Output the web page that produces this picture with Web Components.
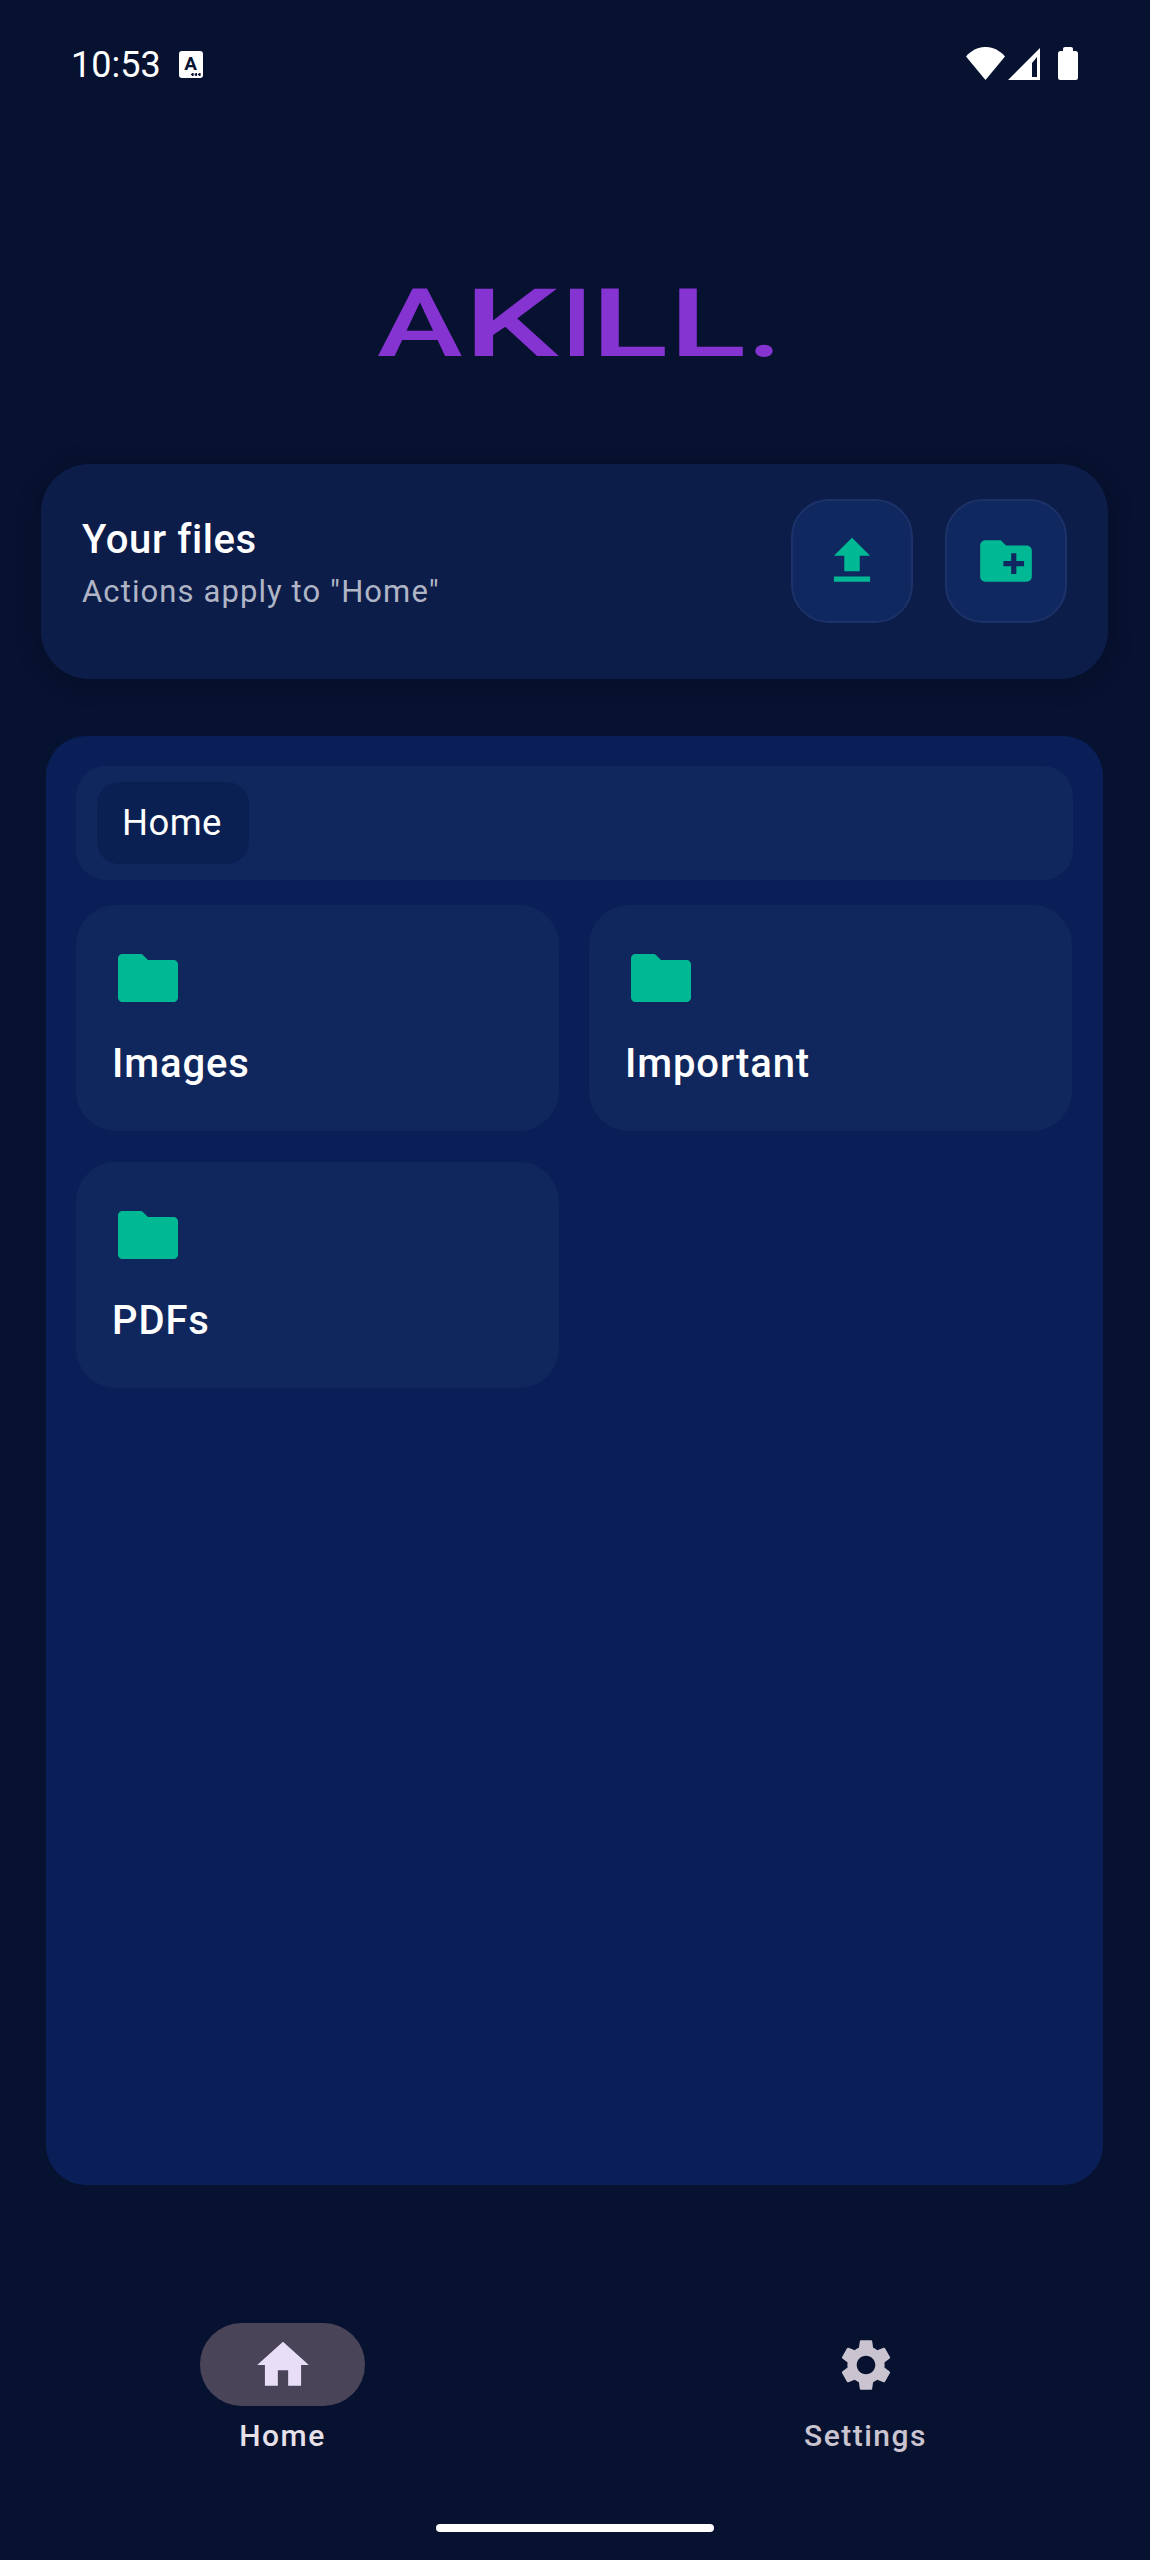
<!DOCTYPE html>
<html>
<head>
<meta charset="utf-8">
<style>
    html, body { margin: 0; background: #071231; }
    body { width: 1150px; height: 2560px; overflow: hidden; font-family: Roboto, sans-serif; color: #fff; }
</style>
</head>
<body>
<app-status-bar></app-status-bar>
<app-logo></app-logo>
<files-header></files-header>
<folder-panel>
    <folder-tile name="Images"></folder-tile>
    <folder-tile name="Important"></folder-tile>
    <folder-tile name="PDFs"></folder-tile>
</folder-panel>
<bottom-nav>
    <nav-item label="Home" icon="home" active></nav-item>
    <nav-item label="Settings" icon="settings"></nav-item>
</bottom-nav>
<gesture-handle></gesture-handle>

<script>
const ICONS = {
    upload: 'M9 16h6v-6h4l-7-7-7 7h4zm-4 2h14v2H5z',
    newFolder: 'M20 6h-8l-2-2H4c-1.11 0-1.99.89-1.99 2L2 18c0 1.11.89 2 2 2h16c1.11 0 2-.89 2-2V8c0-1.11-.89-2-2-2zm-1 8h-3v3h-2v-3h-3v-2h3V9h2v3h3v2z',
    folder: 'M10.3 4.3C10.1 4.1 9.9 4 9.6 4H3.5C2.7 4 2 4.7 2 5.5v13C2 19.3 2.700 20 3.500 20h17c.8 0 1.500-.7 1.500-1.500v-11C22 6.700 21.300 6 20.500 6H12z',
    home: 'M10 20v-6h4v6h5v-8h3L12 3 2 12h3v8z',
    settings: 'M19.14 12.94c.04-.3.06-.61.06-.94 0-.32-.02-.64-.07-.94l2.03-1.58c.18-.14.23-.41.12-.61l-1.92-3.32c-.12-.22-.37-.29-.59-.22l-2.39.96c-.5-.38-1.03-.7-1.62-.94l-.36-2.54c-.04-.24-.24-.41-.48-.41h-3.84c-.24 0-.43.17-.47.41l-.36 2.54c-.59.24-1.13.57-1.62.94l-2.39-.96c-.22-.08-.47 0-.59.22L2.74 8.87c-.12.21-.08.47.12.61l2.03 1.58c-.05.3-.09.63-.09.94s.02.64.07.94l-2.03 1.58c-.18.14-.23.41-.12.61l1.92 3.32c.12.22.37.29.59.22l2.39-.96c.5.38 1.03.7 1.62.94l.36 2.54c.05.24.24.41.48.41h3.84c.24 0 .44-.17.47-.41l.36-2.54c.59-.24 1.13-.56 1.62-.94l2.39.96c.22.08.47 0 .59-.22l1.92-3.32c.12-.22.07-.47-.12-.61l-2.01-1.58zM12 15.6c-1.98 0-3.6-1.62-3.6-3.6s1.62-3.6 3.6-3.6 3.6 1.62 3.6 3.6-1.62 3.6-3.6 3.6z'
};

function icon(name, size) {
    return `<svg xmlns="http://www.w3.org/2000/svg" width="${size}" height="${size}" viewBox="0 0 24 24" fill="currentColor"><path d="${ICONS[name]}"/></svg>`;
}

class AppStatusBar extends HTMLElement {
    constructor() {
        super();
        this.attachShadow({mode: 'open'});
        this.shadowRoot.innerHTML = `
            <style>
                :host { display: flex; align-items: flex-start; height: 80px; box-sizing: border-box; padding: 44px 72px 0 71px; color: #fff; }
                .time { font: 400 36px/42px Roboto, sans-serif; }
                .badge { position: relative; width: 24px; height: 27px; margin: 7px 0 0 18px; background: #fff; border-radius: 3px; color: #071231; font: 700 19px/25px Roboto, sans-serif; text-align: center; }
                .dots { position: absolute; right: 2px; bottom: 2px; width: 10px; height: 3px; background: radial-gradient(circle at 1.500px 1.500px, #071231 1.200px, transparent 1.500px) 0 0 / 3.500px 3px; }
                .right { margin-left: auto; display: flex; align-items: flex-start; padding-top: 3px; }
                svg { display: block; }
            </style>
            <span class="time">10:53</span>
            <div class="badge">A<span class="dots"></span></div>
            <div class="right">
                <svg width="39" height="33" viewBox="0 0 39 33" fill="#fff"><path d="M0 9.500C11-3.200 28-3.200 39 9.500L19.500 33z"/></svg>
                <svg style="margin:1px 0 0 3px" width="32" height="32" viewBox="0 0 32 32" fill="#fff" fill-rule="evenodd"><path d="M32 0V32H0zM24 15L29 9V29H24z"/></svg>
                <svg style="margin-left:18px" width="20" height="33" viewBox="0 0 20 33" fill="#fff"><path d="M5 4V2a2 2 0 0 1 2-2h6a2 2 0 0 1 2 2v2h2.500A2.500 2.500 0 0 1 20 6.500v24a2.500 2.500 0 0 1-2.500 2.500h-15A2.500 2.500 0 0 1 0 30.500v-24A2.500 2.500 0 0 1 2.500 4z"/></svg>
            </div>
        `;
    }
}

class AppLogo extends HTMLElement {
    constructor() {
        super();
        this.attachShadow({mode: 'open'});
        // real text, each letter stretched to the wide shape of the wordmark
        const letters = [['A', 87, 1.36, 500], ['K', 99, 1.57, 500], ['I', 28, 1, 700], ['L', 78, 1.5, 500], ['L', 78, 1.5, 500], ['.', 34, 1.33, 500]];
        this.shadowRoot.innerHTML = `
            <style>
                :host { display: flex; padding: 210px 0 0 377px; }
                .mark { display: flex; height: 68px; font: 500 95px/68px Roboto, sans-serif; color: #8533d1; white-space: nowrap; }
                span { display: block; flex: none; transform-origin: 0 50%; }
            </style>
            <div class="mark">${letters.map(([c, w, s, fw]) => `<span style="width:${w}px;font-weight:${fw};transform:scaleX(${s})">${c}</span>`).join('')}</div>
        `;
    }
}

class FilesHeader extends HTMLElement {
    constructor() {
        super();
        this.attachShadow({mode: 'open'});
        this.shadowRoot.innerHTML = `
            <style>
                :host { display: flex; align-items: flex-start; box-sizing: border-box; height: 215px; margin: 106px 42px 0 41px; padding: 0 41px; background: #0d1d4a; border-radius: 48px; box-shadow: 0 4px 26px rgba(0, 0, 0, .22); }
                .text { flex: 1; padding-top: 52px; }
                .title { font: 500 40px/47px Roboto, sans-serif; letter-spacing: .6px; color: #fff; }
                .sub { font: 400 31px/36px Roboto, sans-serif; letter-spacing: 1.100px; color: #b0b5c6; margin-top: 11px; }
                .actions { display: flex; gap: 32px; padding-top: 35px; }
                button { display: flex; align-items: center; justify-content: center; width: 122px; height: 124px; box-sizing: border-box; padding: 0; background: #0f2860; border: 2.500px solid #1c3268; border-radius: 38px; color: #00b894; }
                svg { display: block; }
            </style>
            <div class="text">
                <div class="title">Your files</div>
                <div class="sub">Actions apply to "Home"</div>
            </div>
            <div class="actions">
                <button>${icon('upload', 62)}</button>
                <button>${icon('newFolder', 62)}</button>
            </div>
        `;
    }
}

class FolderPanel extends HTMLElement {
    constructor() {
        super();
        this.attachShadow({mode: 'open'});
        this.shadowRoot.innerHTML = `
            <style>
                :host { display: block; box-sizing: border-box; height: 1449px; margin: 57px 47px 0 46px; padding: 30px; background: #0a1f58; border-radius: 40px; }
                .crumbs { display: flex; align-items: center; height: 114px; box-sizing: border-box; padding: 0 21px; background: #10275e; border-radius: 30px; }
                .chip { display: flex; align-items: center; height: 82px; padding: 0 27px 0 25px; background: #0a1f52; border-radius: 22px; font: 400 36.500px/42px Roboto, sans-serif; letter-spacing: .4px; color: #fff; }
                .grid { display: grid; grid-template-columns: 483px 483px; column-gap: 30px; row-gap: 31px; margin-top: 25px; }
            </style>
            <div class="crumbs"><div class="chip">Home</div></div>
            <div class="grid"><slot></slot></div>
        `;
    }
}

class FolderTile extends HTMLElement {
    constructor() {
        super();
        this.attachShadow({mode: 'open'});
        this.shadowRoot.innerHTML = `
            <style>
                :host { display: block; box-sizing: border-box; height: 226px; padding: 37px 36px 0 36px; background: #10275e; border-radius: 40px; }
                svg { display: block; color: #00b894; }
                .name { font: 500 40px/47px Roboto, sans-serif; letter-spacing: .9px; color: #fff; margin-top: 26px; }
            </style>
            ${icon('folder', 72)}
            <div class="name"></div>
        `;
        this.shadowRoot.querySelector('.name').textContent = this.getAttribute('name');
    }
}

class BottomNav extends HTMLElement {
    constructor() {
        super();
        this.attachShadow({mode: 'open'});
        this.shadowRoot.innerHTML = `
            <style>
                :host { display: flex; gap: 418px; padding: 138px 0 0 200px; }
            </style>
            <slot></slot>
        `;
    }
}

class NavItem extends HTMLElement {
    constructor() {
        super();
        this.attachShadow({mode: 'open'});
        const active = this.hasAttribute('active');
        this.shadowRoot.innerHTML = `
            <style>
                :host { display: flex; flex-direction: column; align-items: center; width: 165px; }
                .pill { display: flex; align-items: center; justify-content: center; width: 165px; height: 83px; border-radius: 42px; background: ${active ? '#4a4458' : 'transparent'}; color: ${active ? '#e8def8' : '#cac4d0'}; }
                .label { font: 500 30px/36px Roboto, sans-serif; letter-spacing: 1.500px; margin-top: 12px; white-space: nowrap; color: ${active ? '#e6e0e9' : '#cac4d0'}; }
                svg { display: block; }
            </style>
            <div class="pill">${icon(this.getAttribute('icon'), 62)}</div>
            <div class="label">${this.getAttribute('label')}</div>
        `;
    }
}

class GestureHandle extends HTMLElement {
    constructor() {
        super();
        this.attachShadow({mode: 'open'});
        this.shadowRoot.innerHTML = `
            <style>
                :host { display: block; width: 278px; height: 8px; margin: 70px auto 0; background: #fff; border-radius: 4px; }
            </style>
        `;
    }
}

customElements.define('app-status-bar', AppStatusBar);
customElements.define('app-logo', AppLogo);
customElements.define('files-header', FilesHeader);
customElements.define('folder-panel', FolderPanel);
customElements.define('folder-tile', FolderTile);
customElements.define('bottom-nav', BottomNav);
customElements.define('nav-item', NavItem);
customElements.define('gesture-handle', GestureHandle);
</script>
</body>
</html>
